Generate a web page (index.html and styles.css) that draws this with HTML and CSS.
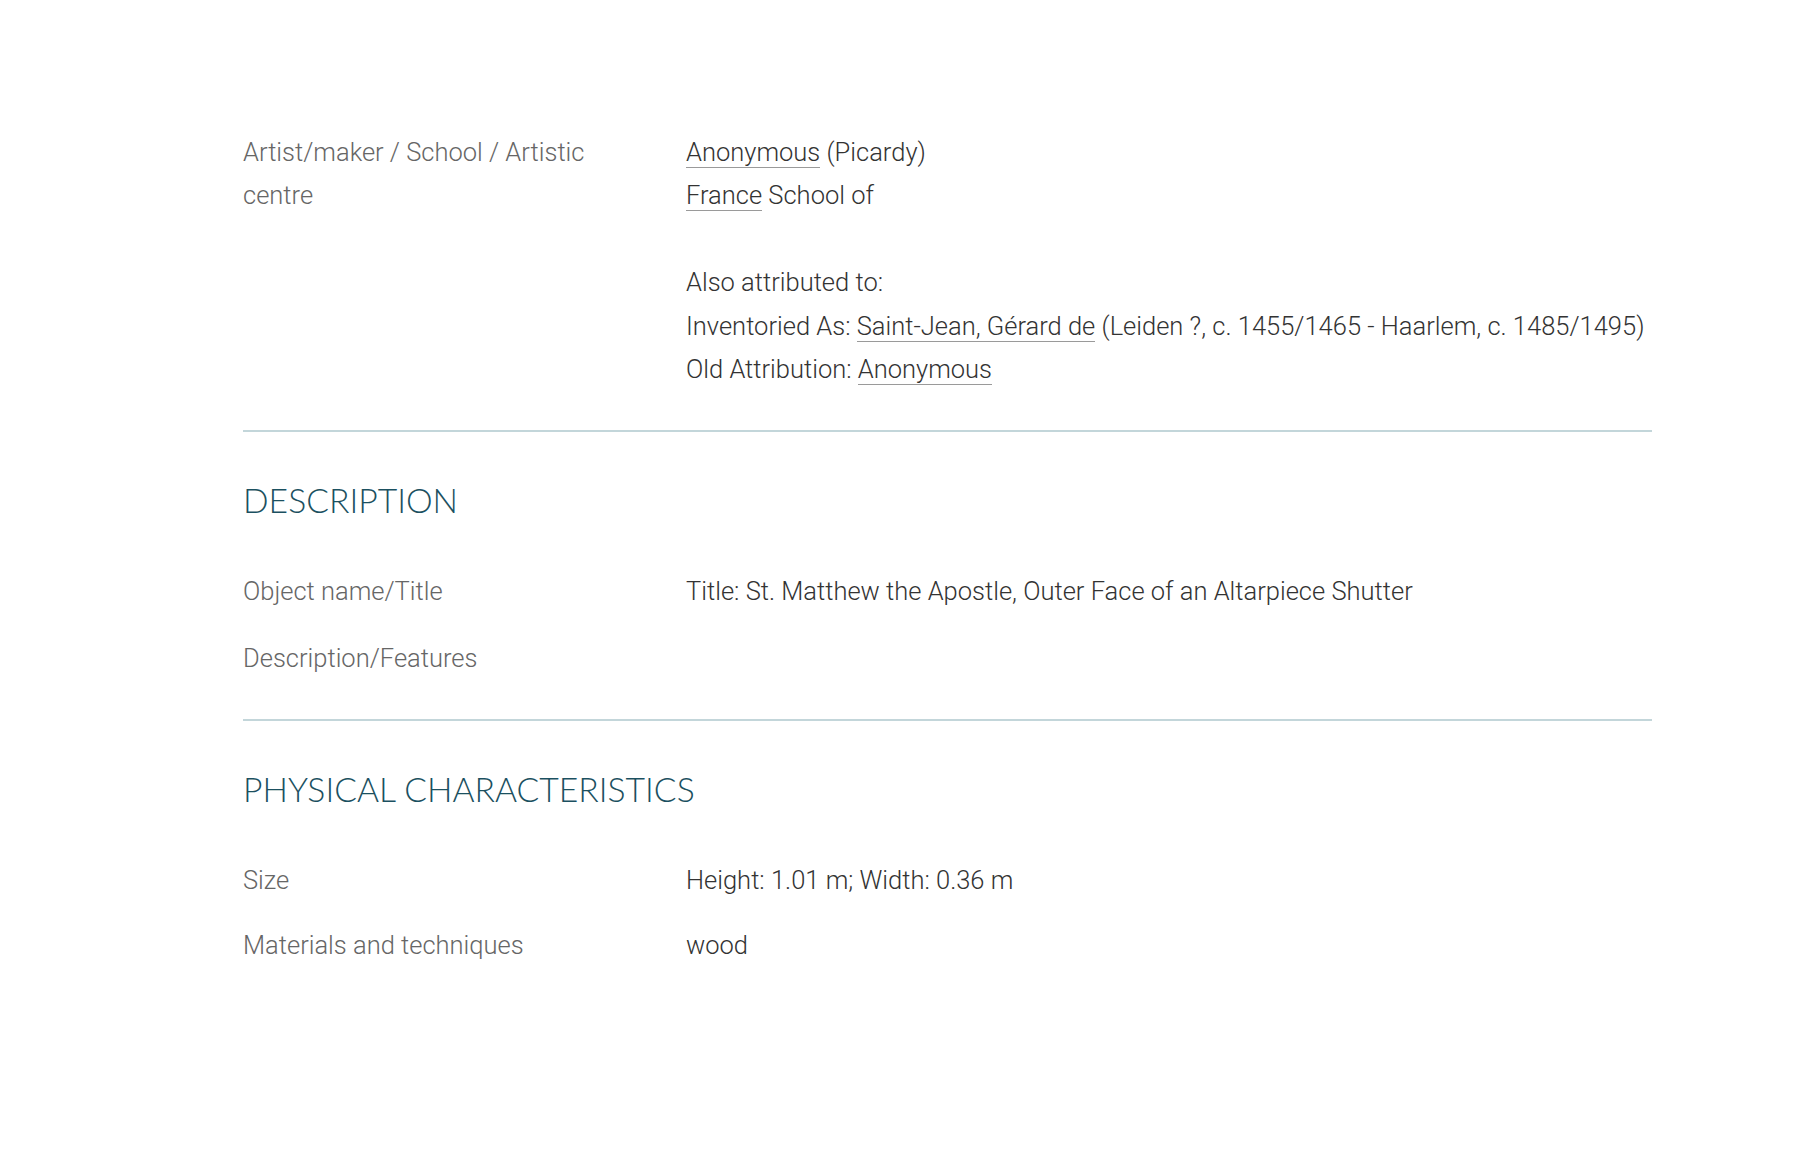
FILE: index.html
```html
<!DOCTYPE html>
<html lang="en">
<head>
<meta charset="utf-8">
<title>St. Matthew the Apostle</title>
<link rel="stylesheet" href="styles.css">
</head>
<body>
<main class="record">
  <section class="section section-first">
    <div class="row">
      <div class="label">Artist/maker / School / Artistic centre</div>
      <div class="value">
        <a class="link" href="#">Anonymous</a> (Picardy)<br>
        <a class="link" href="#">France</a> School of<br>
        <br>
        Also attributed to:<br>
        Inventoried As: <a class="link" href="#">Saint-Jean, Gérard de</a> (Leiden ?, c. 1455/1465 - Haarlem, c. 1485/1495)<br>
        Old Attribution: <a class="link" href="#">Anonymous</a>
      </div>
    </div>
  </section>
  <section class="section section-desc">
    <h2 class="heading">DESCRIPTION</h2>
    <div class="row">
      <div class="label">Object name/Title</div>
      <div class="value">Title: St. Matthew the Apostle, Outer Face of an Altarpiece Shutter</div>
    </div>
    <div class="row">
      <div class="label">Description/Features</div>
      <div class="value"></div>
    </div>
  </section>
  <section class="section section-last">
    <h2 class="heading">PHYSICAL CHARACTERISTICS</h2>
    <div class="row">
      <div class="label">Size</div>
      <div class="value">Height: 1.01 m; Width: 0.36 m</div>
    </div>
    <div class="row">
      <div class="label">Materials and techniques</div>
      <div class="value">wood</div>
    </div>
  </section>
</main>
</body>
</html>
```
FILE: styles.css
```css
html, body {
  margin: 0;
  padding: 0;
  background: #ffffff;
}
body {
  font-family: Roboto, "Liberation Sans", sans-serif;
  font-weight: 300;
  font-size: 25.5px;
  line-height: 43.4px;
  color: #333333;
}
.record {
  width: 1409px;
  padding: 131px 0 120px 243px;
}
.section {
  display: flex;
  flex-direction: column;
  gap: 23px;
  padding: 0 0 39px 0;
  border-bottom: 2px solid #c3d6da;
}
.section-desc {
  padding-top: 47.5px;
  padding-bottom: 38px;
  gap: 24px;
}
.section-last {
  padding-top: 48px;
  gap: 22px;
  border-bottom: none;
}
.heading {
  margin: 0 0 26px 0;
  font-family: Lato, "Open Sans", sans-serif;
  font-weight: 300;
  font-size: 33.7px;
  line-height: 40px;
  color: #1b5060;
}
.section-last .heading {
  margin-bottom: 28px;
}
.row {
  display: grid;
  grid-template-columns: 443px 1fr;
  min-height: 43.4px;
}
.label {
  color: #666666;
  padding-right: 60px;
}
.value {
  color: #333333;
}
.link {
  color: #333333;
  text-decoration: none;
  border-bottom: 1px solid #9a9a9a;
}
```
